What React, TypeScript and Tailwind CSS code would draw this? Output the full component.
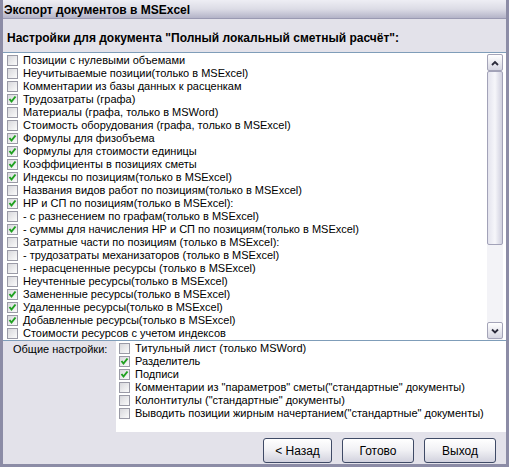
import React from "react";

const listItems: [string, boolean][] = [
  ["Позиции с нулевыми объемами", false],
  ["Неучитываемые позиции(только в MSExcel)", false],
  ["Комментарии из базы данных к расценкам", false],
  ["Трудозатраты (графа)", true],
  ["Материалы (графа, только в MSWord)", false],
  ["Стоимость оборудования (графа, только в MSExcel)", false],
  ["Формулы для физобъема", true],
  ["Формулы для стоимости единицы", true],
  ["Коэффициенты в позициях сметы", true],
  ["Индексы по позициям(только в MSExcel)", true],
  ["Названия видов работ по позициям(только в MSExcel)", false],
  ["НР и СП по позициям(только в MSExcel):", true],
  ["- с разнесением по графам(только в MSExcel)", false],
  ["- суммы для начисления НР и СП по позициям(только в MSExcel)", true],
  ["Затратные части по позициям (только в MSExcel):", false],
  ["- трудозатраты механизаторов (только в MSExcel)", false],
  ["- нерасцененные ресурсы (только в MSExcel)", false],
  ["Неучтенные ресурсы(только в MSExcel)", false],
  ["Замененные ресурсы(только в MSExcel)", true],
  ["Удаленные ресурсы(только в MSExcel)", true],
  ["Добавленные ресурсы(только в MSExcel)", true],
  ["Стоимости ресурсов с учетом индексов", false],
];

const generalItems: [string, boolean][] = [
  ["Титульный лист (только MSWord)", false],
  ["Разделитель", true],
  ["Подписи", true],
  ["Комментарии из \"параметров\" сметы(\"стандартные\" документы)", false],
  ["Колонтитулы (\"стандартные\" документы)", false],
  ["Выводить позиции жирным начертанием(\"стандартные\" документы)", false],
];

function CheckBox({ checked }: { checked: boolean }) {
  return (
    <div className="w-[11px] h-[11px] shrink-0 border border-[#9a9aa6] bg-gradient-to-br from-[#d8d8dc] to-[#fbfbfb] flex items-center justify-center">
      {checked && (
        <svg width="9" height="9" viewBox="0 0 9 9">
          <path d="M1.5 4 L3.5 6.5 L7.5 1.5" fill="none" stroke="#21a121" strokeWidth="2" />
        </svg>
      )}
    </div>
  );
}

function Row({ text, checked }: { text: string; checked: boolean }) {
  return (
    <div className="h-[13px] flex items-center whitespace-nowrap">
      <CheckBox checked={checked} />
      <span className="ml-[5px] leading-[13px]">{text}</span>
    </div>
  );
}

function ScrollButton({ up }: { up: boolean }) {
  return (
    <div className="h-[17px] w-[16px] rounded-[2px] border border-[#a4a4b8] bg-gradient-to-b from-[#ffffff] to-[#d6d6e2] flex items-center justify-center">
      <svg width="8" height="6" viewBox="0 0 8 6">
        <path
          d={up ? "M1 5 L4 2 L7 5" : "M1 1.5 L4 4.5 L7 1.5"}
          fill="none"
          stroke="#2a2a3a"
          strokeWidth="1.8"
        />
      </svg>
    </div>
  );
}

function Button({ label, w }: { label: string; w: string }) {
  return (
    <div
      className={`${w} h-[25px] rounded-[3px] border border-[#3f4a66] bg-gradient-to-b from-[#ffffff] via-[#f0f0f4] to-[#d2d2de] flex items-center justify-center text-[12px]`}
    >
      {label}
    </div>
  );
}

export default function App() {
  return (
    <div
      className="w-[509px] h-[467px] box-border flex flex-col bg-[#e3e2ea] border-x-[3px] border-b-[3px] border-[#8c8ca6] text-black text-[11px] overflow-hidden"
      style={{ fontFamily: '"Liberation Sans", Arial, sans-serif' }}
    >
      {/* Title bar */}
      <div className="h-[19px] shrink-0 bg-gradient-to-b from-[#eeeef4] via-[#dcdce6] to-[#b4b4c8] border-b border-[#9a9ab2] flex items-end pl-[1px] pb-[1px]">
        <span className="font-bold text-[12px] leading-[14px]">Экспорт документов в MSExcel</span>
      </div>

      {/* Header */}
      <div className="h-[33px] shrink-0 flex items-center pl-[4px] pt-[5px]">
        <span className="font-bold text-[12px]">Настройки для документа "Полный локальный сметный расчёт":</span>
      </div>

      {/* List box */}
      <div className="h-[289px] shrink-0 bg-white border-y border-[#7f9db9] flex">
        <div className="flex-1 pt-[1px] pl-[4px] overflow-hidden">
          {listItems.map(([t, c], i) => (
            <Row key={i} text={t} checked={c} />
          ))}
        </div>
        <div className="w-[16px] mr-[3px] mt-[1px] flex flex-col bg-[#f3f3f7]">
          <ScrollButton up />
          <div className="h-[174px] rounded-[2px] border border-[#a2a2b8] bg-gradient-to-r from-[#e4e4ee] via-[#f6f6fa] to-[#cfcfde]" />
          <div className="flex-1" />
          <ScrollButton up={false} />
          <div className="h-[1px]" />
        </div>
      </div>

      {/* Bottom */}
      <div className="flex-1 flex flex-col">
        <div className="flex h-[91px]">
          <div className="w-[113px] shrink-0 pl-[10px] pt-[1px]">
            <div className="h-[14px] flex items-center">Общие настройки:</div>
          </div>
          <div className="flex-1 bg-white pt-[1px] pl-[3px]">
            {generalItems.map(([t, c], i) => (
              <Row key={i} text={t} checked={c} />
            ))}
          </div>
        </div>
        <div className="flex justify-end gap-[10px] pr-[10px] mt-[6px]">
          <Button label="< Назад" w="w-[69px]" />
          <Button label="Готово" w="w-[72px]" />
          <Button label="Выход" w="w-[72px]" />
        </div>
      </div>
    </div>
  );
}
